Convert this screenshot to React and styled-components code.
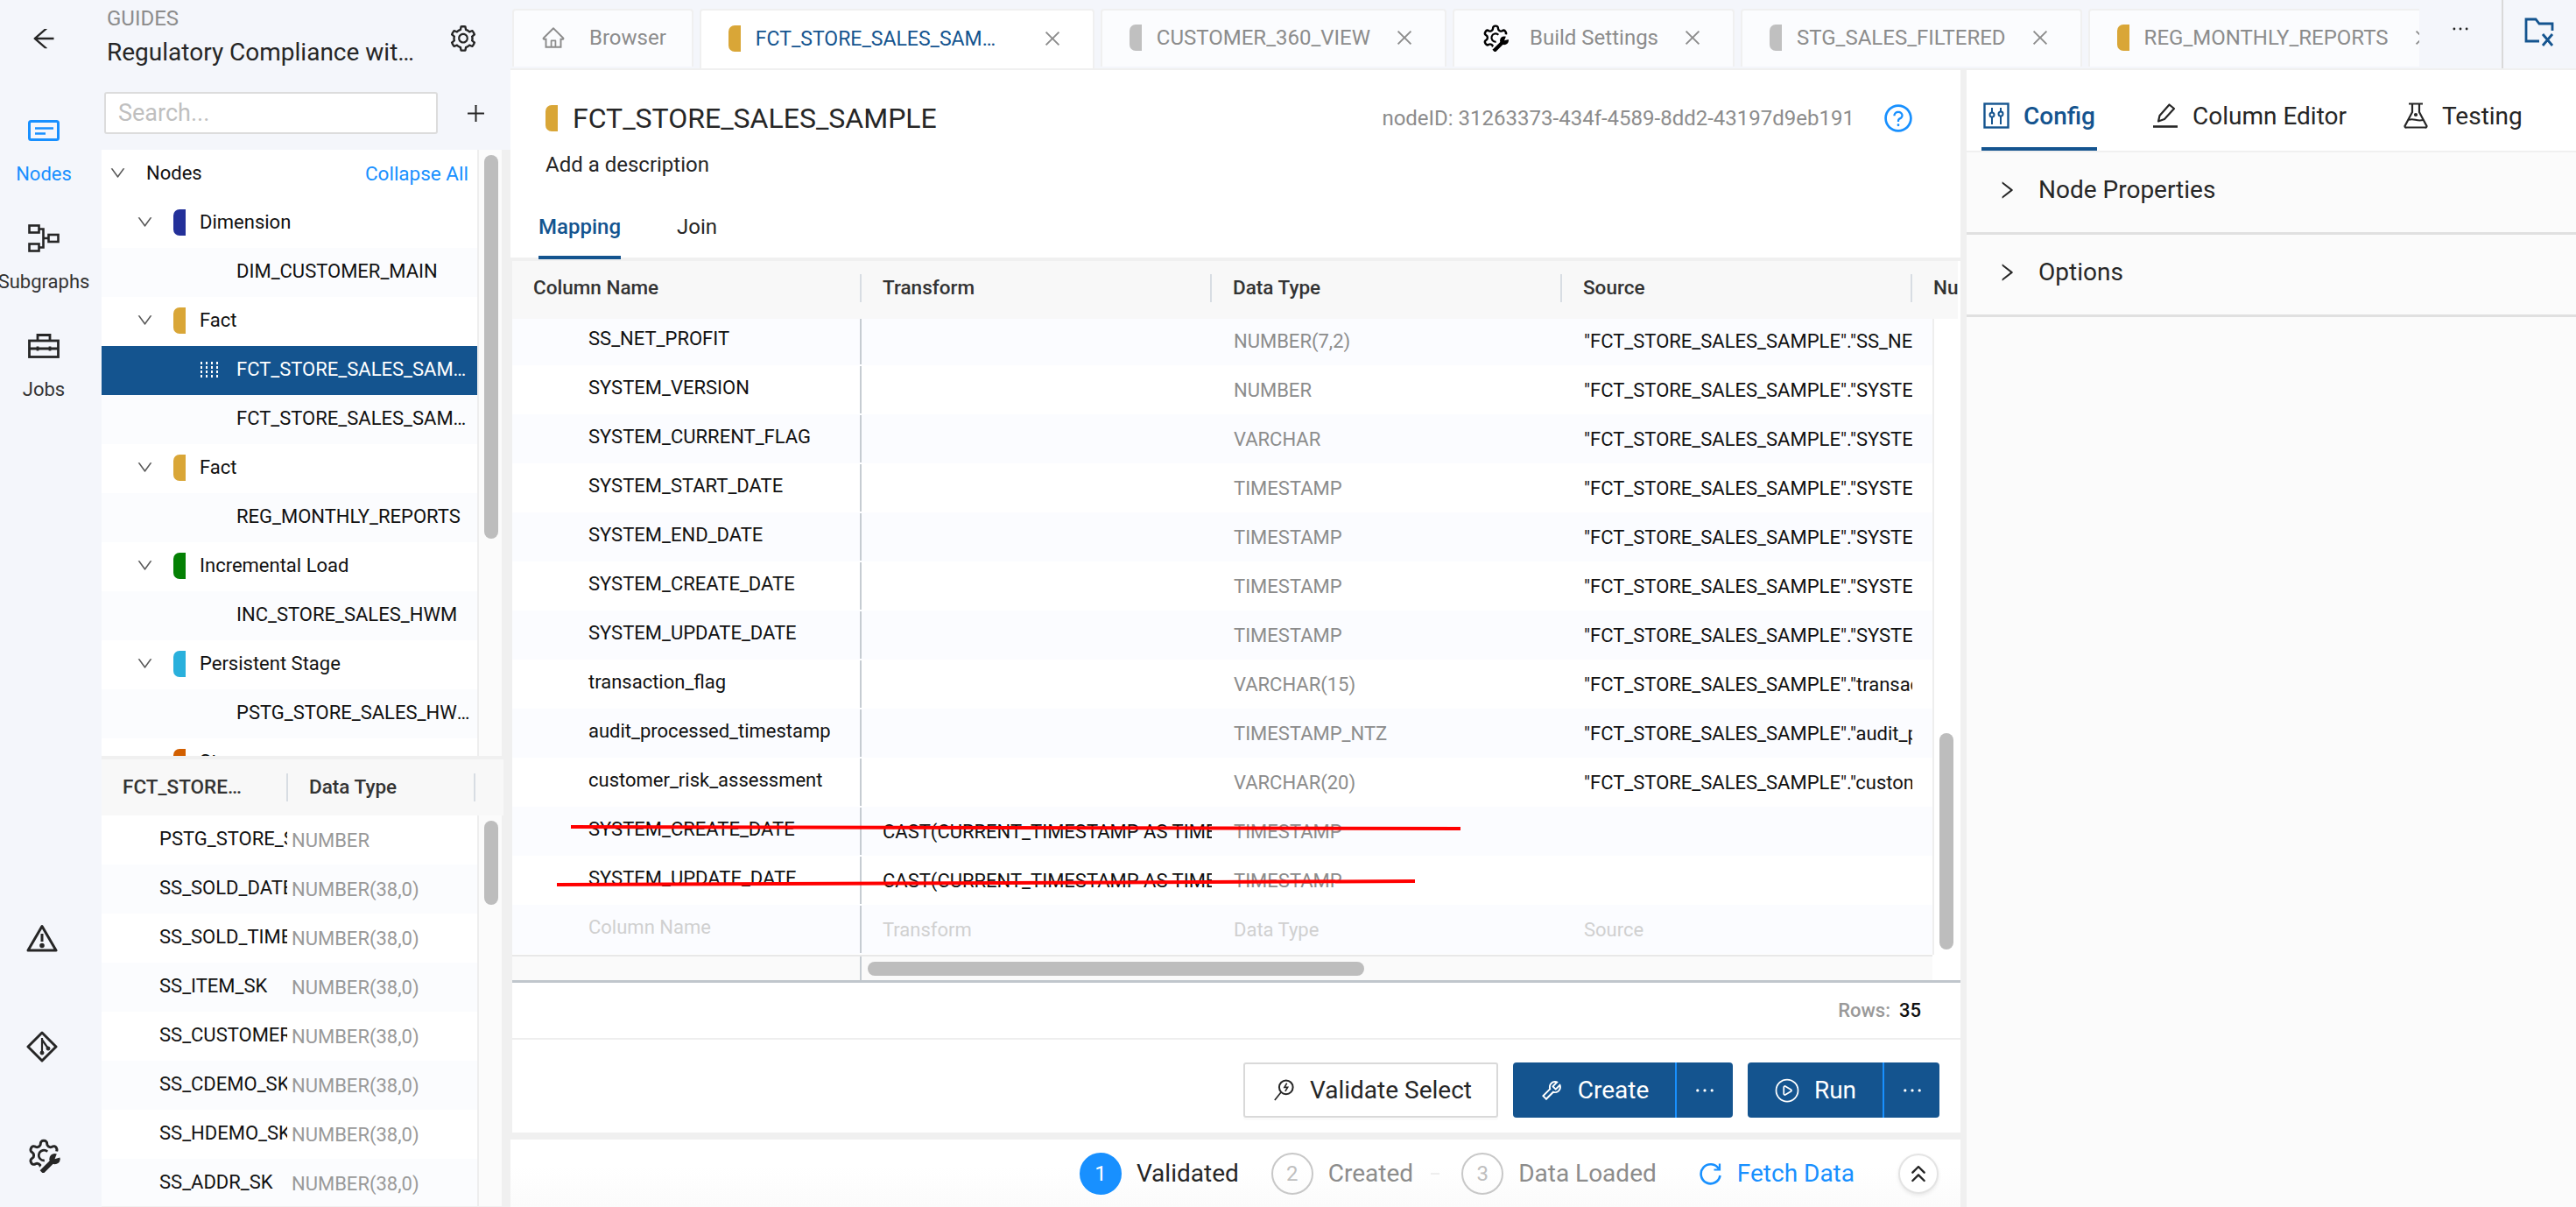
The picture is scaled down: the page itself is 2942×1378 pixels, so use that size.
import React from 'react';
import styled, { createGlobalStyle } from 'styled-components';
import {
  AiOutlineArrowLeft, AiOutlineClose, AiOutlineDown, AiOutlineEllipsis, AiOutlineHome,
  AiOutlinePlus, AiOutlineQuestionCircle, AiOutlineRight, AiOutlineSetting, AiOutlineTool,
} from 'react-icons/ai';
import { ChevronsUp, CirclePlay } from 'lucide-react';

const BLUE = '#14548f';
const LINK = '#1890ff';
const GEAR = 'M12.22 2h-.44a2 2 0 0 0-2 2v.18a2 2 0 0 1-1 1.73l-.43.25a2 2 0 0 1-2 0l-.15-.08a2 2 0 0 0-2.73.73l-.22.38a2 2 0 0 0 .73 2.73l.15.1a2 2 0 0 1 1 1.72v.51a2 2 0 0 1-1 1.74l-.15.09a2 2 0 0 0-.73 2.73l.22.38a2 2 0 0 0 2.73.73l.15-.08a2 2 0 0 1 2 0l.43.25a2 2 0 0 1 1 1.73V20a2 2 0 0 0 2 2h.44a2 2 0 0 0 2-2v-.18a2 2 0 0 1 1-1.73l.43-.25a2 2 0 0 1 2 0l.15.08a2 2 0 0 0 2.73-.73l.22-.39a2 2 0 0 0-.73-2.73l-.15-.08a2 2 0 0 1-1-1.74v-.5a2 2 0 0 1 1-1.74l.15-.09a2 2 0 0 0 .73-2.73l-.22-.38a2 2 0 0 0-2.73-.73l-.15.08a2 2 0 0 1-2 0l-.43-.25a2 2 0 0 1-1-1.73V4a2 2 0 0 0-2-2z';

const tree = [
  { kind: 'root', label: 'Nodes' },
  { kind: 'group', label: 'Dimension', color: '#233099' },
  { kind: 'leaf', label: 'DIM_CUSTOMER_MAIN' },
  { kind: 'group', label: 'Fact', color: '#d9a637' },
  { kind: 'leaf', label: 'FCT_STORE_SALES_SAMPLE', selected: true },
  { kind: 'leaf', label: 'FCT_STORE_SALES_SAMPLE_2' },
  { kind: 'group', label: 'Fact', color: '#d9a637' },
  { kind: 'leaf', label: 'REG_MONTHLY_REPORTS' },
  { kind: 'group', label: 'Incremental Load', color: '#048004' },
  { kind: 'leaf', label: 'INC_STORE_SALES_HWM' },
  { kind: 'group', label: 'Persistent Stage', color: '#29b0dc' },
  { kind: 'leaf', label: 'PSTG_STORE_SALES_HWM_VIEW' },
  { kind: 'group', label: 'Stage', color: '#d25f00' },
];

const subColumns = [
  ['PSTG_STORE_SALES', 'NUMBER'],
  ['SS_SOLD_DATE_SK', 'NUMBER(38,0)'],
  ['SS_SOLD_TIME_SK', 'NUMBER(38,0)'],
  ['SS_ITEM_SK', 'NUMBER(38,0)'],
  ['SS_CUSTOMER_SK', 'NUMBER(38,0)'],
  ['SS_CDEMO_SK', 'NUMBER(38,0)'],
  ['SS_HDEMO_SK', 'NUMBER(38,0)'],
  ['SS_ADDR_SK', 'NUMBER(38,0)'],
];

const source = (c) => `"FCT_STORE_SALES_SAMPLE"."${c}"`;
const cast = 'CAST(CURRENT_TIMESTAMP AS TIMESTAMP)';
const mapping = [
  ['SS_NET_PROFIT', '', 'NUMBER(7,2)', source('SS_NET_PROFIT')],
  ['SYSTEM_VERSION', '', 'NUMBER', source('SYSTEM_VERSION')],
  ['SYSTEM_CURRENT_FLAG', '', 'VARCHAR', source('SYSTEM_CURRENT_FLAG')],
  ['SYSTEM_START_DATE', '', 'TIMESTAMP', source('SYSTEM_START_DATE')],
  ['SYSTEM_END_DATE', '', 'TIMESTAMP', source('SYSTEM_END_DATE')],
  ['SYSTEM_CREATE_DATE', '', 'TIMESTAMP', source('SYSTEM_CREATE_DATE')],
  ['SYSTEM_UPDATE_DATE', '', 'TIMESTAMP', source('SYSTEM_UPDATE_DATE')],
  ['transaction_flag', '', 'VARCHAR(15)', source('transaction_flag')],
  ['audit_processed_timestamp', '', 'TIMESTAMP_NTZ', source('audit_processed_timestamp')],
  ['customer_risk_assessment', '', 'VARCHAR(20)', source('customer_risk_assessment')],
  ['SYSTEM_CREATE_DATE', cast, 'TIMESTAMP', ''],
  ['SYSTEM_UPDATE_DATE', cast, 'TIMESTAMP', ''],
];

const tabs = [
  { label: 'CUSTOMER_360_VIEW', color: '#c0c0c0' },
  { label: 'Build Settings', build: true },
  { label: 'STG_SALES_FILTERED', color: '#c0c0c0' },
  { label: 'REG_MONTHLY_REPORTS', color: '#d9a637' },
];

const GlobalStyle = createGlobalStyle`
  html, body { margin: 0; padding: 0; }
  body { font-family: Roboto, "Liberation Sans", sans-serif; color: #262626; }
  * { box-sizing: border-box; }
`;

const Page = styled.div`
  position: relative;
  display: flex;
  width: 2942px;
  height: 1378px;
  overflow: hidden;
  background: #f4f6fb;
`;

/* left icon rail */
const Rail = styled.nav`
  flex: 0 0 116px;
  min-width: 0;
  display: flex;
  flex-direction: column;
  align-items: center;
  padding: 28px 16px 39px 0;
  color: #262626;
`;
const BackButton = styled.div`
  display: flex;
  height: 30px;
  margin-bottom: 71px;
  font-size: 32px;
`;
const NavItem = styled.div`
  display: flex;
  flex-direction: column;
  align-items: center;
  height: 123px;
  color: ${(p) => (p.$active ? LINK : '#262626')};
`;
const NavIcon = styled.div`
  display: flex;
  align-items: center;
  height: 40px;
`;
const NavLabel = styled.div`
  margin-top: 15px;
  font-size: 22px;
  line-height: 30px;
  white-space: nowrap;
  color: ${(p) => (p.$active ? LINK : '#333')};
`;
const RailBottom = styled.div`
  display: flex;
  flex-direction: column;
  gap: 84px;
  margin-top: auto;
`;

/* guides sidebar */
const Sidebar = styled.aside`
  flex: 0 0 467px;
  display: flex;
  flex-direction: column;
`;
const SidebarTop = styled.div`
  height: 171px;
  padding-top: 6px;
`;
const GuideHead = styled.div`
  display: flex;
  align-items: center;
  padding-left: 6px;
`;
const GuideText = styled.div`
  width: 352px;
`;
const GuideKicker = styled.div`
  font-size: 24px;
  line-height: 30px;
  color: #8c8c8c;
`;
const GuideTitle = styled.div`
  margin-top: 2px;
  font-size: 28px;
  line-height: 44px;
  color: #262626;
  white-space: nowrap;
  overflow: hidden;
  text-overflow: ellipsis;
`;
const GearSlot = styled.div`
  display: flex;
  margin-left: 38px;
  font-size: 34px;
  color: #262626;
`;
const SearchRow = styled.div`
  display: flex;
  align-items: center;
  margin-top: 23px;
  padding-left: 3px;
`;
const SearchBox = styled.div`
  width: 381px;
  height: 48px;
  padding-left: 14px;
  border: 2px solid #dcdcdc;
  border-radius: 3px;
  background: #fff;
  font-size: 27px;
  line-height: 44px;
  color: #bfbfbf;
`;
const PlusSlot = styled.div`
  display: flex;
  margin-left: 30px;
  font-size: 27px;
  color: #262626;
`;
const SidebarBody = styled.div`
  flex: 1;
  display: flex;
  flex-direction: column;
  min-height: 0;
  padding-right: 8px;
  background: #f0f0f0;
`;
const Scrolled = styled.div`
  display: flex;
  height: ${(p) => p.$height}px;
  margin-right: 2px;
  background: #fff;
  overflow: hidden;
`;
const ScrollContent = styled.div`
  flex: 0 0 429px;
  overflow: hidden;
`;
const VTrack = styled.div`
  flex: 1;
  padding: ${(p) => p.$offset}px 0 0 6px;
  border-left: 2px solid #eeeeee;
  background: #fbfbfb;
`;
const Thumb = styled.div`
  width: 16px;
  height: ${(p) => p.$length}px;
  border-radius: 8px;
  background: #bdbdbd;
`;
const TreeRow = styled.div`
  position: relative;
  display: flex;
  align-items: center;
  height: 56px;
  padding-bottom: 3px;
  padding-left: ${(p) => p.$indent}px;
  padding-right: ${(p) => (p.$leaf ? 8 : 10)}px;
  font-size: 22px;
  color: ${(p) => (p.$selected ? '#fff' : '#111')};
  background: ${(p) => (p.$selected ? BLUE : p.$leaf ? '#fbfcfe' : '#fff')};
`;
const TreeChevron = styled.span`
  display: flex;
  flex: 0 0 21px;
  margin-right: 22px;
  font-size: 21px;
  color: #595959;
`;
const KindBar = styled.span`
  flex: 0 0 14px;
  height: 30px;
  border-radius: 7px 0 0 7px;
  background: ${(p) => p.$color};
`;
const TreeKind = styled(KindBar)`
  margin-right: 16px;
`;
const RowLabel = styled.span`
  flex: 1;
  min-width: 0;
  white-space: nowrap;
  overflow: hidden;
  text-overflow: ellipsis;
`;
const CollapseAll = styled.span`
  font-size: 22.5px;
  color: ${LINK};
`;
const DragSlot = styled.span`
  position: absolute;
  left: 112px;
  top: 17px;
  display: flex;
`;
const SubHead = styled.div`
  display: grid;
  grid-template-columns: 213px 214px;
  align-items: center;
  flex: 0 0 64px;
  margin-top: 4px;
  background: #f8f8f8;
  font-size: 22.5px;
  font-weight: 500;
  color: #333;
`;
const SubHeadCell = styled.div`
  height: 32px;
  padding: 0 ${(p) => p.$right || 0}px 0 24px;
  line-height: 30px;
  border-right: 2px solid #d8dde3;
  white-space: nowrap;
  overflow: hidden;
  text-overflow: ellipsis;
`;
const SubRow = styled.div`
  display: flex;
  align-items: center;
  height: 56px;
  padding-left: 66px;
  font-size: 22px;
  &:nth-child(even) { background: #fbfcfe; }
`;
const SubName = styled.div`
  flex: 0 0 146px;
  padding-bottom: 3px;
  overflow: hidden;
  white-space: nowrap;
  color: #111;
`;
const SubType = styled.div`
  margin-left: 5px;
  color: #999;
`;

/* workspace */
const Workspace = styled.main`
  flex: 1;
  display: flex;
  flex-direction: column;
  min-width: 0;
`;
const TabBar = styled.div`
  display: flex;
  flex: 0 0 78px;
  border-bottom: 2px solid #f0f0f0;
`;
const TabStrip = styled.div`
  flex: 1;
  display: flex;
  gap: 7px;
  min-width: 0;
  height: 78px;
  padding: 10px 0 0 2px;
  overflow: hidden;
`;
const Tab = styled.div`
  flex: 0 0 auto;
  display: flex;
  align-items: center;
  height: ${(p) => (p.$active ? 68 : 66)}px;
  padding: 0 ${(p) => (p.$plain ? 29 : 34)}px 2px 31px;
  border: 2px solid #f0f0f0;
  border-bottom: 0;
  border-radius: 4px 4px 0 0;
  background: ${(p) => (p.$active ? '#fff' : '#fbfcfe')};
  font-size: 24px;
  color: ${(p) => (p.$active ? BLUE : '#8c8c8c')};
`;
const TabBarKind = styled(KindBar)`
  margin-right: 17px;
`;
const TabIconSlot = styled.span`
  display: flex;
  margin-right: ${(p) => p.$gap}px;
  font-size: 28px;
  color: #8c8c8c;
`;
const TabName = styled.span`
  white-space: nowrap;
  overflow: hidden;
  text-overflow: ellipsis;
`;
const ActiveTabName = styled(TabName)`
  width: 287px;
  font-size: 23px;
`;
const TabClose = styled.span`
  display: flex;
  margin-left: ${(p) => p.$gap || 27}px;
  font-size: 24px;
  color: #8c8c8c;
`;
const TabTools = styled.div`
  flex: 0 0 179px;
  display: flex;
  align-items: stretch;
  background: #f4f6fb;
`;
const MoreTabs = styled.div`
  flex: 0 0 94px;
  display: flex;
  justify-content: center;
  padding-top: 20px;
  font-size: 26px;
  color: #262626;
`;
const FolderSlot = styled.div`
  flex: 1;
  display: flex;
  justify-content: center;
  padding-top: 20px;
  border-left: 2px solid #d9d9d9;
`;
const Panels = styled.div`
  flex: 1;
  display: flex;
  gap: 7px;
  min-height: 0;
  background: #f0f0f0;
`;
const MainPanel = styled.section`
  flex: 0 0 1656px;
  display: flex;
  flex-direction: column;
`;
const NodeHeader = styled.header`
  flex: 0 0 214px;
  display: flex;
  flex-direction: column;
  background: #fff;
`;
const TitleRow = styled.div`
  display: flex;
  align-items: center;
  height: 34px;
  margin-top: 38px;
  padding: 0 53px 0 40px;
`;
const NodeTitle = styled.h1`
  flex: 1;
  margin: 0 0 0 17px;
  font-size: 32px;
  font-weight: 400;
  color: #262626;
`;
const NodeId = styled.div`
  font-size: 24px;
  color: #8c8c8c;
`;
const HelpSlot = styled.div`
  display: flex;
  margin-left: 32px;
  font-size: 36px;
  color: ${LINK};
`;
const Description = styled.div`
  margin: 22px 0 0 40px;
  font-size: 24px;
  color: #262626;
`;
const InnerTabs = styled.div`
  display: flex;
  gap: 64px;
  margin-top: auto;
  margin-bottom: -2px;
  padding-left: 32px;
`;
const InnerTab = styled.div`
  height: 54px;
  border-bottom: 4px solid ${(p) => (p.$active ? BLUE : 'transparent')};
  font-size: 24px;
  line-height: 34px;
  font-weight: ${(p) => (p.$active ? 500 : 400)};
  color: ${(p) => (p.$active ? BLUE : '#262626')};
`;

const Table = styled.div`
  display: flex;
  flex-direction: column;
  flex: 0 0 889px;
  margin: 4px 0 0 2px;
  background: #fff;
`;
const MAP_GRID = '399px 400px 400px 400px 1fr';
const TableHead = styled.div`
  display: grid;
  grid-template-columns: ${MAP_GRID};
  align-items: center;
  flex: 0 0 66px;
  margin-right: 3px;
  padding-bottom: 4px;
  background: #f8f8f8;
  font-size: 22.5px;
  font-weight: 500;
  color: #333;
`;
const HeadCell = styled.div`
  height: 32px;
  padding-left: 24px;
  line-height: 30px;
  border-right: ${(p) => (p.$last ? 0 : '2px solid #d8dde3')};
  white-space: nowrap;
  overflow: hidden;
`;
const TableMiddle = styled.div`
  display: flex;
  flex: 0 0 726px;
`;
const RowsView = styled.div`
  flex: 0 0 1622px;
  overflow: hidden;
`;
const RowsInner = styled.div`
  margin-top: -3px;
`;
const MapRow = styled.div`
  display: grid;
  grid-template-columns: ${MAP_GRID};
  align-items: center;
  height: 56px;
  font-size: 22px;
  &:nth-child(odd) { background: #fbfcff; }
`;
const NameCell = styled.div`
  height: 54px;
  padding-left: 87px;
  line-height: 50px;
  border-right: 2px solid #c6ccd2;
  color: ${(p) => (p.$ghost ? '#d0d0d0' : '#111')};
  white-space: nowrap;
  overflow: hidden;
`;
const MapCell = styled.div`
  padding-left: ${(p) => p.$pad || 24}px;
  color: ${(p) => p.$color};
  white-space: nowrap;
  overflow: hidden;
`;
const TableVTrack = styled.div`
  flex: 1;
  padding: 473px 0 0 6px;
  border-left: 2px solid #eeeeee;
`;
const HBar = styled.div`
  display: flex;
  flex: 0 0 29px;
  width: 1622px;
  border-top: 2px solid #e8e8e8;
  background: #fafafa;
`;
const HBarLead = styled.div`
  flex: 0 0 399px;
  border-right: 2px solid #c6ccd2;
`;
const HThumb = styled.div`
  width: 567px;
  height: 16px;
  margin: 6px 0 0 7px;
  border-radius: 8px;
  background: #bdbdbd;
`;
const RowsBar = styled.div`
  display: flex;
  align-items: center;
  justify-content: flex-end;
  flex: 1;
  padding-right: 45px;
  border-top: 3px solid #c0c6cc;
  border-bottom: 2px solid #eeeeee;
  font-size: 22px;
  font-weight: 500;
  color: #999;
`;
const RowsCount = styled.b`
  margin-left: 10px;
  font-weight: 500;
  color: #111;
`;
const ActionBar = styled.div`
  flex: 0 0 106px;
  display: flex;
  justify-content: flex-end;
  gap: 17px;
  padding: 26px 24px 0 0;
  background: #fff;
  margin-left: 2px;
`;
const OutlineButton = styled.div`
  display: flex;
  align-items: center;
  justify-content: center;
  gap: 18px;
  width: 291px;
  height: 63px;
  padding-left: 4px;
  border: 2px solid #d9d9d9;
  border-radius: 3px;
  box-shadow: 0 3px 0 rgba(0, 0, 0, 0.02);
  font-size: 28px;
  color: #262626;
`;
const SolidButton = styled.div`
  display: flex;
  height: 63px;
  border-radius: 4px;
  background: ${BLUE};
  color: #fff;
  font-size: 28px;
  overflow: hidden;
`;
const SolidMain = styled.div`
  display: flex;
  align-items: center;
  justify-content: center;
  gap: 16px;
  width: ${(p) => p.$width}px;
  border-right: 2px solid ${LINK};
`;
const SolidMore = styled.div`
  display: flex;
  align-items: center;
  justify-content: center;
  width: ${(p) => p.$width}px;
  font-size: 30px;
`;
const StepBar = styled.footer`
  flex: 1;
  display: flex;
  align-items: center;
  justify-content: flex-end;
  margin-top: 8px;
  padding: 0 25px 0 0;
  background: linear-gradient(180deg, #ffffff 0%, #ffffff 40%, #fbfbfb 100%);
`;
const Step = styled.div`
  display: flex;
  align-items: center;
  gap: 17px;
  margin-right: ${(p) => p.$after}px;
  font-size: 28px;
  color: ${(p) => (p.$done ? '#262626' : '#8c8c8c')};
`;
const StepDot = styled.span`
  display: flex;
  align-items: center;
  justify-content: center;
  width: 48px;
  height: 48px;
  border-radius: 50%;
  border: 2px solid ${(p) => (p.$done ? LINK : '#c8c8c8')};
  background: ${(p) => (p.$done ? LINK : 'transparent')};
  font-size: 24px;
  color: ${(p) => (p.$done ? '#fff' : '#bfbfbf')};
`;
const StepDash = styled.span`
  width: 10px;
  height: 2px;
  margin: 0 25px 0 20px;
  background: #eeeeee;
`;
const FetchLink = styled.div`
  display: flex;
  align-items: center;
  gap: 17px;
  margin-right: 50px;
  font-size: 28px;
  color: ${LINK};
`;
const CollapseDot = styled.div`
  display: flex;
  align-items: center;
  justify-content: center;
  width: 46px;
  height: 46px;
  border: 2px solid #e4e4e4;
  border-radius: 50%;
  background: #fff;
  box-shadow: 0 2px 4px rgba(0, 0, 0, 0.08);
  color: #262626;
`;

/* right config panel */
const ConfigPanel = styled.section`
  flex: 1;
  display: flex;
  flex-direction: column;
  background: #fbfbfb;
`;
const ConfigTabs = styled.div`
  display: flex;
  flex: 0 0 92px;
  gap: 61px;
  padding-left: 17px;
  background: #fff;
  border-bottom: 2px solid #f0f0f0;
`;
const ConfigTab = styled.div`
  display: flex;
  align-items: center;
  gap: 16px;
  height: 92px;
  padding: 16px 2px 0;
  border-bottom: 4px solid ${(p) => (p.$active ? BLUE : 'transparent')};
  font-size: 28px;
  font-weight: ${(p) => (p.$active ? 500 : 400)};
  color: ${(p) => (p.$active ? BLUE : '#262626')};
`;
const AccordionRow = styled.div`
  display: flex;
  align-items: center;
  gap: 23px;
  height: 94px;
  padding: 0 0 6px 33px;
  border-bottom: 3px solid #e0e0e0;
  font-size: 28px;
  color: #262626;
`;
const AccordionIcon = styled.span`
  display: flex;
  font-size: 26px;
`;
const Annotation = styled.svg`
  position: absolute;
  left: 0;
  top: 0;
  pointer-events: none;
`;

const NodesIcon = () => (
  <svg width="36" height="24" viewBox="0 0 36 24" fill="none" stroke="currentColor" strokeWidth="3">
    <rect x="1.5" y="1.5" width="33" height="21" rx="2" />
    <path d="M8 9.5h21M8 15.5h12" strokeWidth="2.6" />
  </svg>
);
const SubgraphIcon = () => (
  <svg width="36" height="32" viewBox="0 0 36 32" fill="none" stroke="currentColor" strokeWidth="2.6">
    <rect x="1.5" y="1.5" width="11" height="8" />
    <rect x="1.5" y="22.5" width="11" height="8" />
    <rect x="23.5" y="12" width="11" height="8" />
    <path d="M12.5 5.5h5v21h-5M17.5 16h6" />
  </svg>
);
const JobsIcon = () => (
  <svg width="36" height="28" viewBox="0 0 36 28" fill="none" stroke="currentColor" strokeWidth="2.8">
    <rect x="1.5" y="8" width="33" height="18.5" />
    <path d="M11 8V1.5h14V8M1.5 17h33M11 14.5v5M25 14.5v5" />
  </svg>
);
const WarnIcon = () => (
  <svg width="36" height="32" viewBox="0 0 36 32" fill="none" stroke="currentColor" strokeWidth="3">
    <path d="M18 2.5 34 30H2Z" strokeLinejoin="round" />
    <path d="M18 11v9" />
    <circle cx="18" cy="24.5" r="1.3" fill="currentColor" />
  </svg>
);
const GitIcon = () => (
  <svg width="36" height="36" viewBox="0 0 36 36" fill="none" stroke="currentColor" strokeWidth="3" strokeLinejoin="round">
    <path d="M18 2 34 18 18 34 2 18Z" />
    <path d="M18 8v17M18 10l7 10" strokeWidth="2.2" />
    <circle cx="18" cy="25" r="2" fill="currentColor" strokeWidth="1" />
    <circle cx="25" cy="20" r="2" fill="currentColor" strokeWidth="1" />
  </svg>
);
const BuildGearIcon = ({ size, knock, color = '#262626' }) => (
  <svg width={size} height={size} viewBox="0 0 24 24" fill="none">
    <path d={GEAR} stroke={color} strokeWidth="1.8" />
    <path d="M14.5 9.5A3.5 3.5 0 1 0 12.5 15.5" stroke={color} strokeWidth="1.6" />
    <path d="M10.5 23.5 19 15" stroke={knock} strokeWidth="6.5" />
    <circle cx="19.5" cy="14.5" r="5.5" fill={knock} />
    <path d="M10.5 23.5 18.5 15.5" stroke={color} strokeWidth="3.2" />
    <circle cx="19.5" cy="14.5" r="3.7" fill={color} />
    <path d="M19.5 14.5 21.5 9.5 25 13Z" fill={knock} />
  </svg>
);
const DragIcon = () => (
  <svg width="22" height="20" viewBox="0 0 22 20" fill="#fff">
    {[1, 7, 13, 19].map((x) => [1, 6, 11, 16].map((y) => <rect key={`${x}-${y}`} x={x} y={y} width="2" height="3" />))}
  </svg>
);
const FolderXIcon = () => (
  <svg width="36" height="34" viewBox="0 0 36 34" fill="none" stroke={BLUE} strokeWidth="2.8">
    <path d="M17 27H2V2h11l4 5h15v8" />
    <path d="M21 19l11 13M32 19 21 32" />
  </svg>
);
const SlidersIcon = () => (
  <svg width="30" height="30" viewBox="0 0 30 30" fill="none" stroke={BLUE} strokeWidth="2.4">
    <rect x="1.5" y="1.5" width="27" height="27" />
    <path d="M10 6v5M10 17v8M20 6v4M20 16v9" strokeWidth="2" />
    <circle cx="10" cy="14" r="2.5" strokeWidth="2" />
    <circle cx="20" cy="13" r="2.5" strokeWidth="2" />
  </svg>
);
const PenIcon = () => (
  <svg width="30" height="30" viewBox="0 0 30 30" fill="none" stroke="#262626" strokeWidth="2.2">
    <path d="M7 21.5 8.5 15 19.5 2.5 25 7 14 19Z" strokeLinejoin="round" />
    <path d="M1 27.5h28" strokeWidth="2.6" />
  </svg>
);
const FlaskIcon = () => (
  <svg width="28" height="30" viewBox="0 0 28 30" fill="none" stroke="#262626" strokeWidth="2.2">
    <path d="M6 1.5h16M10 1.5V11L2 26a1.5 1.5 0 0 0 1.5 2.5h21A1.5 1.5 0 0 0 26 26L18 11V1.5" />
    <path d="M6 20c5-3 9 2 16 0" strokeWidth="2" />
    <circle cx="14" cy="14" r="1" fill="#262626" />
  </svg>
);
const ProbeIcon = () => (
  <svg width="24" height="26" viewBox="0 0 26 28" fill="none" stroke="#262626" strokeWidth="2.2">
    <circle cx="16" cy="10" r="8.5" />
    <path d="M10 16 2 26M17 5l-3 5h4l-3 5" strokeWidth="1.8" />
  </svg>
);
const ReloadIcon = () => (
  <svg width="27" height="26" viewBox="0 0 27 26" fill="none" stroke={LINK} strokeWidth="2.6">
    <path d="M23 7.5A11 11 0 1 0 24.5 15" />
    <path d="M24 1.5v7h-6.5" strokeWidth="2.2" />
  </svg>
);

const App = () => (
  <Page>
    <GlobalStyle />
    <Rail>
      <BackButton><AiOutlineArrowLeft /></BackButton>
      <NavItem $active>
        <NavIcon><NodesIcon /></NavIcon>
        <NavLabel $active>Nodes</NavLabel>
      </NavItem>
      <NavItem>
        <NavIcon><SubgraphIcon /></NavIcon>
        <NavLabel>Subgraphs</NavLabel>
      </NavItem>
      <NavItem>
        <NavIcon><JobsIcon /></NavIcon>
        <NavLabel>Jobs</NavLabel>
      </NavItem>
      <RailBottom>
        <NavIcon><WarnIcon /></NavIcon>
        <NavIcon><GitIcon /></NavIcon>
        <NavIcon><BuildGearIcon size={40} knock="#f4f6fb" /></NavIcon>
      </RailBottom>
    </Rail>

    <Sidebar>
      <SidebarTop>
        <GuideHead>
          <GuideText>
            <GuideKicker>GUIDES</GuideKicker>
            <GuideTitle>Regulatory Compliance with Snowflake</GuideTitle>
          </GuideText>
          <GearSlot><AiOutlineSetting /></GearSlot>
        </GuideHead>
        <SearchRow>
          <SearchBox>Search...</SearchBox>
          <PlusSlot><AiOutlinePlus /></PlusSlot>
        </SearchRow>
      </SidebarTop>
      <SidebarBody>
        <Scrolled $height={692}>
          <ScrollContent>
            {tree.map((item, i) => {
              if (item.kind === 'leaf') {
                return (
                  <TreeRow key={i} $leaf $indent={154} $selected={item.selected}>
                    {item.selected && <DragSlot><DragIcon /></DragSlot>}
                    <RowLabel>{item.label}</RowLabel>
                  </TreeRow>
                );
              }
              if (item.kind === 'root') {
                return (
                  <TreeRow key={i} $indent={8}>
                    <TreeChevron><AiOutlineDown /></TreeChevron>
                    <RowLabel>{item.label}</RowLabel>
                    <CollapseAll>Collapse All</CollapseAll>
                  </TreeRow>
                );
              }
              return (
                <TreeRow key={i} $indent={39}>
                  <TreeChevron><AiOutlineDown /></TreeChevron>
                  <TreeKind $color={item.color} />
                  <RowLabel>{item.label}</RowLabel>
                </TreeRow>
              );
            })}
          </ScrollContent>
          <VTrack $offset={6}><Thumb $length={438} /></VTrack>
        </Scrolled>
        <SubHead>
          <SubHeadCell $right={50}>FCT_STORE_SALES_SAMPLE</SubHeadCell>
          <SubHeadCell>Data Type</SubHeadCell>
        </SubHead>
        <Scrolled $height={446}>
          <ScrollContent>
            {subColumns.map(([name, type]) => (
              <SubRow key={name}>
                <SubName>{name}</SubName>
                <SubType>{type}</SubType>
              </SubRow>
            ))}
          </ScrollContent>
          <VTrack $offset={6}><Thumb $length={96} /></VTrack>
        </Scrolled>
      </SidebarBody>
    </Sidebar>

    <Workspace>
      <TabBar>
        <TabStrip>
          <Tab $plain>
            <TabIconSlot $gap={27}><AiOutlineHome /></TabIconSlot>
            <TabName>Browser</TabName>
          </Tab>
          <Tab $active>
            <TabBarKind $color="#d9a637" />
            <ActiveTabName>FCT_STORE_SALES_SAMPLE</ActiveTabName>
            <TabClose $gap={40}><AiOutlineClose /></TabClose>
          </Tab>
          {tabs.map((t) => (
            <Tab key={t.label}>
              {t.build
                ? <TabIconSlot $gap={23}><BuildGearIcon size={32} knock="#fbfcfe" color="#000" /></TabIconSlot>
                : <TabBarKind $color={t.color} />}
              <TabName>{t.label}</TabName>
              <TabClose><AiOutlineClose /></TabClose>
            </Tab>
          ))}
        </TabStrip>
        <TabTools>
          <MoreTabs><AiOutlineEllipsis /></MoreTabs>
          <FolderSlot><FolderXIcon /></FolderSlot>
        </TabTools>
      </TabBar>

      <Panels>
        <MainPanel>
          <NodeHeader>
            <TitleRow>
              <KindBar $color="#d9a637" />
              <NodeTitle>FCT_STORE_SALES_SAMPLE</NodeTitle>
              <NodeId>nodeID: 31263373-434f-4589-8dd2-43197d9eb191</NodeId>
              <HelpSlot><AiOutlineQuestionCircle /></HelpSlot>
            </TitleRow>
            <Description>Add a description</Description>
            <InnerTabs>
              <InnerTab $active>Mapping</InnerTab>
              <InnerTab>Join</InnerTab>
            </InnerTabs>
          </NodeHeader>

          <Table>
            <TableHead>
              <HeadCell>Column Name</HeadCell>
              <HeadCell>Transform</HeadCell>
              <HeadCell>Data Type</HeadCell>
              <HeadCell>Source</HeadCell>
              <HeadCell $last>Nullable</HeadCell>
            </TableHead>
            <TableMiddle>
              <RowsView>
                <RowsInner>
                  {mapping.map(([name, transform, type, src], i) => (
                    <MapRow key={i}>
                      <NameCell>{name}</NameCell>
                      <MapCell $color="#111">{transform}</MapCell>
                      <MapCell $color="#8c8c8c" $pad={25}>{type}</MapCell>
                      <MapCell $color="#111" $pad={25}>{src}</MapCell>
                    </MapRow>
                  ))}
                  <MapRow>
                    <NameCell $ghost>Column Name</NameCell>
                    <MapCell $color="#d0d0d0">Transform</MapCell>
                    <MapCell $color="#d0d0d0" $pad={25}>Data Type</MapCell>
                    <MapCell $color="#d0d0d0" $pad={25}>Source</MapCell>
                  </MapRow>
                </RowsInner>
              </RowsView>
              <TableVTrack><Thumb $length={247} /></TableVTrack>
            </TableMiddle>
            <HBar>
              <HBarLead />
              <HThumb />
            </HBar>
            <RowsBar>Rows:<RowsCount>35</RowsCount></RowsBar>
          </Table>

          <ActionBar>
            <OutlineButton><ProbeIcon />Validate Select</OutlineButton>
            <SolidButton>
              <SolidMain $width={187}><AiOutlineTool size={28} />Create</SolidMain>
              <SolidMore $width={64}><AiOutlineEllipsis /></SolidMore>
            </SolidButton>
            <SolidButton>
              <SolidMain $width={156}><CirclePlay size={30} strokeWidth={1.4} />Run</SolidMain>
              <SolidMore $width={63}><AiOutlineEllipsis /></SolidMore>
            </SolidButton>
          </ActionBar>

          <StepBar>
            <Step $done $after={37}><StepDot $done>1</StepDot>Validated</Step>
            <Step $after={0}><StepDot>2</StepDot>Created</Step>
            <StepDash />
            <Step $after={48}><StepDot>3</StepDot>Data Loaded</Step>
            <FetchLink><ReloadIcon />Fetch Data</FetchLink>
            <CollapseDot><ChevronsUp size={32} strokeWidth={1.8} /></CollapseDot>
          </StepBar>
        </MainPanel>

        <ConfigPanel>
          <ConfigTabs>
            <ConfigTab $active><SlidersIcon />Config</ConfigTab>
            <ConfigTab><PenIcon />Column Editor</ConfigTab>
            <ConfigTab><FlaskIcon />Testing</ConfigTab>
          </ConfigTabs>
          <AccordionRow>
            <AccordionIcon><AiOutlineRight /></AccordionIcon>Node Properties
          </AccordionRow>
          <AccordionRow>
            <AccordionIcon><AiOutlineRight /></AccordionIcon>Options
          </AccordionRow>
        </ConfigPanel>
      </Panels>
    </Workspace>

    <Annotation width="2942" height="1378" viewBox="0 0 2942 1378">
      <path d="M652 944 1668 946" stroke="#ff0000" strokeWidth="4" />
      <path d="M636 1010 1616 1006" stroke="#ff0000" strokeWidth="4" />
    </Annotation>
  </Page>
);

export default App;
